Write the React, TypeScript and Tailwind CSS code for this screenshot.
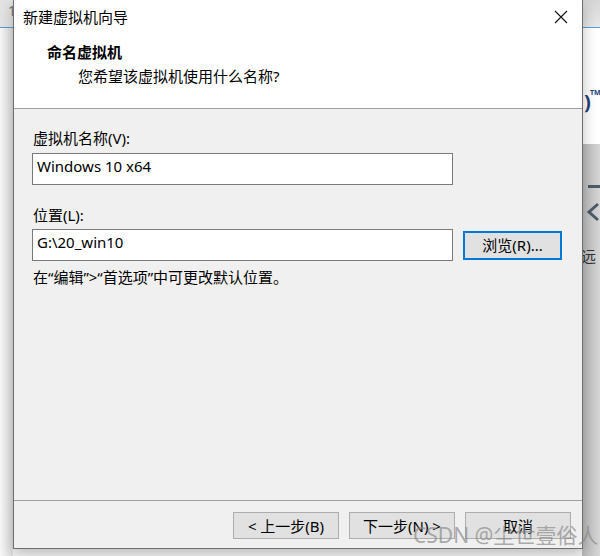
const ui = "font-['Noto_Sans','Noto_Sans_CJK_SC',sans-serif] text-[15px] leading-[20px] text-black";

function CloseIcon() {
  return (
    <svg width="14" height="14" viewBox="0 0 14 14" className="block">
      <path d="M1 1 L13 13 M13 1 L1 13" stroke="#111" strokeWidth="1.1" />
    </svg>
  );
}

function WizardButton({ label, focused }: { label: string; focused?: boolean }) {
  return (
    <button
      className={
        focused
          ? "flex h-[29px] w-[99px] items-center justify-center border-2 border-[#0078d7] bg-[#e1e1e1]"
          : "flex h-[27px] w-[106px] items-center justify-center border border-[#adadad] bg-[#e1e1e1]"
      }
    >
      {label}
    </button>
  );
}

function Desktop() {
  return (
    <div className="absolute inset-0 flex flex-col bg-[#f4f4f4]">
      <div className="flex h-[28px] border-b border-[#5b9bd1]">
        <div className="w-[13px] bg-[#e4e4e4] pl-[8px] pt-[4px] text-[14px] leading-[14px] text-[#777]">1</div>
        <div className="flex-1" />
        <div className="w-[18px] bg-gradient-to-b from-[#d6d6d6] to-[#e8e8e8]" />
      </div>
      <div className="flex flex-1">
        <div className="w-[13px] bg-gradient-to-r from-[#f8f8f8] to-[#dedede]" />
        <div className="flex-1" />
        <div className="flex w-[18px] flex-col">
          <div className="relative h-[116px] bg-white">
            <span className="absolute left-[2px] top-[64px] text-[20px] font-bold leading-[20px] text-[#1d3f7a]">)</span>
            <span className="absolute left-[8px] top-[61px] text-[7px] font-bold leading-[8px] text-[#1d3f7a]">TM</span>
          </div>
          <div className="relative flex-1 bg-gradient-to-r from-[#b9b9b9] to-[#d6d6d6]">
            <div className="absolute left-[6px] top-[41px] h-[3px] w-[12px] bg-[#4d5b69]" />
            <svg className="absolute left-[4px] top-[58px]" width="14" height="20" viewBox="0 0 14 20">
              <path d="M12 2 L3 10 L12 18" stroke="#4d5b69" strokeWidth="3" fill="none" />
            </svg>
            <span className="absolute left-[-1px] top-[102px] font-['Noto_Sans_CJK_SC',sans-serif] text-[15px] leading-[20px] text-[#333]">远</span>
          </div>
        </div>
      </div>
    </div>
  );
}

export default function App() {
  return (
    <div className={`relative h-[556px] w-[600px] overflow-hidden ${ui}`}>
      <Desktop />

      <div className="absolute left-[13px] top-0 flex h-[549px] w-[570px] flex-col border-x border-b border-[#6e6e6e] bg-[#f0f0f0] shadow-[0_4px_14px_rgba(0,0,0,0.25)]">
        <div className="h-[109px] border-b border-[#a0a0a0] bg-white">
          <div className="flex h-[34px] items-center justify-between pl-[9px] pr-[14px]">
            <span>新建虚拟机向导</span>
            <CloseIcon />
          </div>
          <div className="pl-[33px] pt-[8px] font-bold">命名虚拟机</div>
          <div className="pl-[64px] pt-[4px]">您希望该虚拟机使用什么名称?</div>
        </div>

        <div className="flex flex-1 flex-col pl-[18px] pt-[19px]">
          <label className="pl-[1px]">虚拟机名称(V):</label>
          <div className="mt-[5px] h-[32px] w-[421px] border border-[#7a7a7a] bg-white pl-[4px] pt-[2px]">
            Windows 10 x64
          </div>

          <label className="mt-[20px] pl-[1px]">位置(L):</label>
          <div className="mt-[4px] flex items-center gap-[10px]">
            <div className="h-[32px] w-[421px] border border-[#7a7a7a] bg-white pl-[4px] pt-[2px]">
              G:\20_win10
            </div>
            <WizardButton label="浏览(R)..." focused />
          </div>

          <p className="mt-[6px] pl-[1px]">在“编辑”&gt;“首选项”中可更改默认位置。</p>
        </div>

        <div className="flex h-[48px] justify-end gap-[10px] border-t border-[#a0a0a0] pr-[11px] pt-[11px]">
          <WizardButton label="< 上一步(B)" />
          <WizardButton label="下一步(N) >" />
          <WizardButton label="取消" />
        </div>
      </div>

      <span className="absolute left-[413px] top-[522px] font-['Noto_Sans','Noto_Sans_CJK_SC',sans-serif] text-[21px] leading-[26px] text-[#8a8a8a]/70">
        CSDN @尘世壹俗人
      </span>
    </div>
  );
}
